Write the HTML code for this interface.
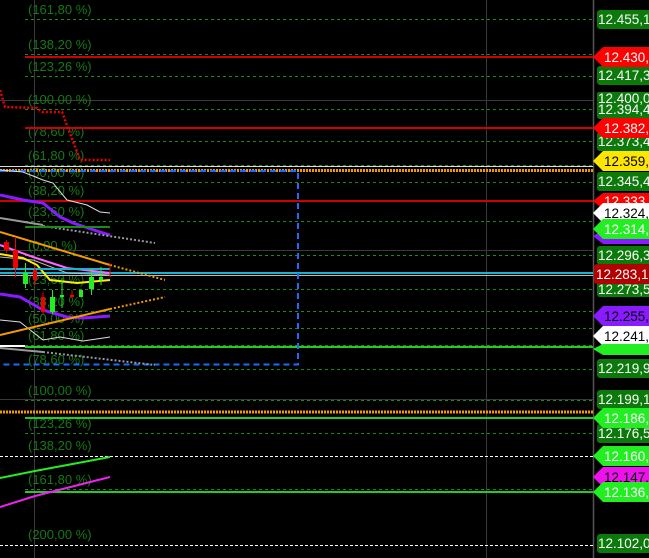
<!DOCTYPE html>
<html><head><meta charset="utf-8"><style>
html,body{margin:0;padding:0;background:#000;width:649px;height:558px;overflow:hidden}
svg{display:block}
.f{font-family:"Liberation Sans",sans-serif;font-size:13px;fill:#137a13}
.p{font-family:"Liberation Sans",sans-serif;font-size:13.5px}
</style></head><body>
<svg width="649" height="558" viewBox="0 0 649 558" xmlns="http://www.w3.org/2000/svg">
<rect width="649" height="558" fill="#000"/>
<g stroke="#3a3a3a" stroke-width="1">
<line x1="34.5" y1="0" x2="34.5" y2="558"/>
<line x1="486.5" y1="0" x2="486.5" y2="558"/>
<line x1="0" y1="100.5" x2="593" y2="100.5"/>
<line x1="0" y1="250.5" x2="593" y2="250.5"/>
<line x1="0" y1="399.5" x2="593" y2="399.5"/>
</g>
<line x1="593.5" y1="0" x2="593.5" y2="558" stroke="#555" stroke-width="1.5"/>
<g stroke="#1c8c1c" stroke-width="1" stroke-dasharray="3,3">
<line x1="25" y1="19.5" x2="593" y2="19.5"/>
<line x1="25" y1="54.5" x2="593" y2="54.5"/>
<line x1="25" y1="76.5" x2="593" y2="76.5"/>
<line x1="25" y1="109.5" x2="593" y2="109.5"/>
<line x1="25" y1="141.5" x2="593" y2="141.5"/>
<line x1="25" y1="165.5" x2="593" y2="165.5"/>
<line x1="25" y1="182.5" x2="593" y2="182.5"/>
<line x1="25" y1="200.5" x2="593" y2="200.5"/>
<line x1="25" y1="221.5" x2="593" y2="221.5"/>
<line x1="25" y1="255.5" x2="593" y2="255.5"/>
<line x1="25" y1="289.5" x2="593" y2="289.5"/>
<line x1="25" y1="311.5" x2="593" y2="311.5"/>
<line x1="25" y1="328.5" x2="593" y2="328.5"/>
<line x1="25" y1="345.5" x2="593" y2="345.5"/>
<line x1="25" y1="369.5" x2="593" y2="369.5"/>
<line x1="25" y1="400.5" x2="593" y2="400.5"/>
<line x1="25" y1="433.5" x2="593" y2="433.5"/>
<line x1="25" y1="489.5" x2="593" y2="489.5"/>
</g>
<g class="f">
<text x="28" y="14">(161,80 %)</text>
<text x="28" y="49">(138,20 %)</text>
<text x="28" y="71">(123,26 %)</text>
<text x="28" y="104">(100,00 %)</text>
<text x="28" y="136">(78,60 %)</text>
<text x="28" y="160">(61,80 %)</text>
<text x="28" y="177">(50,00 %)</text>
<text x="28" y="195">(38,20 %)</text>
<text x="28" y="216">(23,60 %)</text>
<text x="28" y="250">(0,00 %)</text>
<text x="28" y="284">(23,60 %)</text>
<text x="28" y="306">(38,20 %)</text>
<text x="28" y="323">(50,00 %)</text>
<text x="28" y="340">(61,80 %)</text>
<text x="28" y="364">(78,60 %)</text>
<text x="28" y="395">(100,00 %)</text>
<text x="28" y="428">(123,26 %)</text>
<text x="28" y="450">(138,20 %)</text>
<text x="28" y="484">(161,80 %)</text>
<text x="28" y="539">(200,00 %)</text>
</g>
<line x1="25" y1="57" x2="593" y2="57" stroke="#d00000" stroke-width="2"/>
<line x1="25" y1="128" x2="593" y2="128" stroke="#d00000" stroke-width="2"/>
<line x1="0" y1="201" x2="593" y2="201" stroke="#d00000" stroke-width="2"/>
<line x1="0" y1="166.5" x2="593" y2="166.5" stroke="#ddd" stroke-width="1"/>
<line x1="0" y1="170.5" x2="593" y2="170.5" stroke="#f39a00" stroke-width="3" stroke-dasharray="2,1"/>
<line x1="0" y1="273" x2="593" y2="273" stroke="#1ab0d0" stroke-width="2"/>
<line x1="0" y1="275.5" x2="593" y2="275.5" stroke="#bbb" stroke-width="1"/>
<line x1="0" y1="346" x2="25" y2="346" stroke="#fff" stroke-width="2"/>
<line x1="25" y1="347" x2="593" y2="347" stroke="#22cc22" stroke-width="2"/>
<line x1="0" y1="412" x2="593" y2="412" stroke="#f39a00" stroke-width="3" stroke-dasharray="2,1"/>
<line x1="25" y1="418" x2="593" y2="418" stroke="#22cc22" stroke-width="2"/>
<line x1="0" y1="456.5" x2="593" y2="456.5" stroke="#fff" stroke-width="1" stroke-dasharray="3,2"/>
<line x1="25" y1="492" x2="593" y2="492" stroke="#22cc22" stroke-width="2"/>
<line x1="0" y1="545.5" x2="593" y2="545.5" stroke="#fff" stroke-width="1" stroke-dasharray="3,2"/>
<path d="M0 171 H298 V364.5 H0" fill="none" stroke="#1a6cff" stroke-width="2" stroke-dasharray="6,4"/>
<polyline points="0,90 5,107 37,108 42,112 62,112 80,160 110,160" fill="none" stroke="#ee0000" stroke-width="2.5" stroke-dasharray="2,2"/>
<polyline points="0,170 23,172 43,180 53,183 67,200 87,205 100,212 110,213" fill="none" stroke="#ddd" stroke-width="1"/>
<polyline points="0,195 23,200 43,203 60,217 73,223 100,232 110,235" fill="none" stroke="#8a1aff" stroke-width="3"/>
<polyline points="0,218 43,225" fill="none" stroke="#999" stroke-width="2"/>
<line x1="43" y1="226" x2="155" y2="243" stroke="#999" stroke-width="2" stroke-dasharray="2,2"/>
<line x1="25" y1="227" x2="110" y2="227" stroke="#1a8a1a" stroke-width="2"/>
<line x1="0" y1="232" x2="110" y2="265" stroke="#f39a00" stroke-width="2"/>
<line x1="110" y1="265" x2="165" y2="280" stroke="#f39a00" stroke-width="2" stroke-dasharray="2,2"/>
<polyline points="0,245 33,257 67,268 110,273" fill="none" stroke="#ff66ff" stroke-width="2"/>
<polyline points="0,257 33,260 67,273 110,275" fill="none" stroke="#bbb" stroke-width="1"/>
<polyline points="0,254 23,258 37,265 50,280 77,283 110,280" fill="none" stroke="#ffee00" stroke-width="2"/>
<line x1="0" y1="269" x2="110" y2="269" stroke="#1ab0d0" stroke-width="2"/>
<polyline points="0,294 20,297 43,310 67,317 83,318 110,316" fill="none" stroke="#8a1aff" stroke-width="3"/>
<polyline points="0,320 20,322 43,340 60,337 83,341 110,337" fill="none" stroke="#ddd" stroke-width="1"/>
<line x1="0" y1="335" x2="110" y2="309" stroke="#f39a00" stroke-width="2"/>
<line x1="110" y1="309" x2="165" y2="297" stroke="#f39a00" stroke-width="2" stroke-dasharray="2,2"/>
<line x1="0" y1="348" x2="43" y2="352" stroke="#999" stroke-width="2"/>
<line x1="43" y1="352" x2="155" y2="365" stroke="#999" stroke-width="2" stroke-dasharray="2,2"/>
<polyline points="0,478 35,471 110,457" fill="none" stroke="#22ee22" stroke-width="2"/>
<polyline points="0,507 35,496 110,477" fill="none" stroke="#ee22ee" stroke-width="2"/>
<g stroke-width="1">
<line x1="6.5" y1="240" x2="6.5" y2="253" stroke="#e00"/><rect x="4" y="242" width="5" height="8" fill="#e00"/>
<line x1="15.5" y1="237" x2="15.5" y2="277" stroke="#e00"/><rect x="13" y="250" width="5" height="18" fill="#e00"/>
<line x1="25.5" y1="263" x2="25.5" y2="288" stroke="#2e2"/><rect x="23" y="273" width="5" height="11" fill="#2e2"/>
<line x1="35" y1="266" x2="35" y2="285" stroke="#e00"/><rect x="33" y="270" width="4" height="10" fill="#e00"/>
<line x1="43" y1="292" x2="43" y2="314" stroke="#e00"/><rect x="41" y="297" width="4" height="15" fill="#e00"/>
<line x1="52.5" y1="290" x2="52.5" y2="314" stroke="#2e2"/><rect x="50" y="297" width="5" height="15" fill="#2e2"/>
<line x1="62" y1="278" x2="62" y2="308" stroke="#2e2"/><rect x="60" y="295" width="4" height="2" fill="#2e2"/>
<line x1="72" y1="290" x2="72" y2="298" stroke="#e00"/><rect x="70" y="295" width="4" height="2" fill="#e00"/>
<rect x="79" y="290" width="4" height="7" fill="#2e2"/>
<line x1="91.5" y1="268" x2="91.5" y2="295" stroke="#2e2"/><rect x="89" y="277" width="5" height="12" fill="#2e2"/>
<line x1="101" y1="267" x2="101" y2="285" stroke="#2e2"/><rect x="99" y="277" width="4" height="3" fill="#2e2"/>
<line x1="110" y1="263" x2="110" y2="277" stroke="#e00"/>
</g>
<g class="p">
<g fill="#0b7a0b">
<rect x="597" y="10" width="60" height="19" rx="3"/>
<rect x="597" y="66" width="60" height="19" rx="3"/>
<rect x="597" y="92" width="60" height="10" rx="2"/>
<rect x="597" y="100" width="60" height="19" rx="3"/>
<rect x="597" y="132" width="60" height="19" rx="3"/>
<rect x="597" y="172" width="60" height="19" rx="3"/>
<rect x="597" y="246" width="60" height="19" rx="3"/>
<rect x="597" y="281" width="60" height="16" rx="3"/>
<rect x="597" y="359" width="60" height="19" rx="3"/>
<rect x="597" y="390" width="60" height="19" rx="3"/>
<rect x="597" y="424" width="60" height="19" rx="3"/>
<rect x="597" y="534" width="60" height="19" rx="3"/>
</g>
<text x="598" y="24" fill="#fff">12.455,14</text>
<text x="598" y="80" fill="#fff">12.417,31</text>
<text x="598" y="103" fill="#fff">12.400,0</text>
<text x="598" y="114" fill="#fff">12.394,48</text>
<text x="598" y="146" fill="#fff">12.373,47</text>
<text x="598" y="186" fill="#fff">12.345,40</text>
<text x="598" y="260" fill="#fff">12.296,32</text>
<text x="598" y="294" fill="#fff">12.273,55</text>
<text x="598" y="373" fill="#fff">12.219,95</text>
<text x="598" y="404" fill="#fff">12.199,16</text>
<text x="598" y="438" fill="#fff">12.176,56</text>
<text x="598" y="548" fill="#fff">12.102,00</text>
<path d="M593 57 L603 47 H649 V67 H603 Z" fill="#f00"/><text x="604" y="62" fill="#fff">12.430,0</text>
<path d="M593 128 L603 118 H649 V138 H603 Z" fill="#f00"/><text x="604" y="133" fill="#fff">12.382,1</text>
<path d="M593 161 L603 151 H649 V171 H603 Z" fill="#ffe600"/><text x="604" y="166" fill="#000">12.359,5</text>
<path d="M593 201 L603 193 H649 V209 H603 Z" fill="#f00"/><text x="604" y="206" fill="#fff">12.333,1</text>
<path d="M593 213 L603 203 H649 V223 H603 Z" fill="#fff"/><text x="604" y="218" fill="#000">12.324,5</text>
<path d="M593 236 L603 230 H649 V244 H603 Z" fill="#8a1aff"/>
<path d="M593 229 L603 219 H649 V239 H603 Z" fill="#22ee22"/><text x="604" y="234" fill="#fff">12.314,7</text>
<rect x="594" y="264" width="60" height="20" rx="3" fill="#b00000"/><text x="596" y="279" fill="#fff">12.283,13</text>
<path d="M593 316 L603 306 H649 V326 H603 Z" fill="#8a1aff"/><text x="604" y="321" fill="#000">12.255,4</text>
<path d="M593 336 L603 326 H649 V346 H603 Z" fill="#fff"/><text x="604" y="341" fill="#000">12.241,5</text>
<path d="M593 349 L603 344 H649 V355 H603 Z" fill="#22ee22"/>
<path d="M593 418 L603 408 H649 V428 H603 Z" fill="#22ee22"/><text x="604" y="423" fill="#fff">12.186,3</text>
<path d="M593 456 L603 446 H649 V466 H603 Z" fill="#22ee22"/><text x="604" y="461" fill="#fff">12.160,5</text>
<path d="M593 477 L603 467 H649 V487 H603 Z" fill="#ee11ee"/><text x="604" y="482" fill="#000">12.147,8</text>
<path d="M593 492 L603 482 H649 V502 H603 Z" fill="#22ee22"/><text x="604" y="497" fill="#fff">12.136,3</text>
</g>
</svg>
</body></html>
